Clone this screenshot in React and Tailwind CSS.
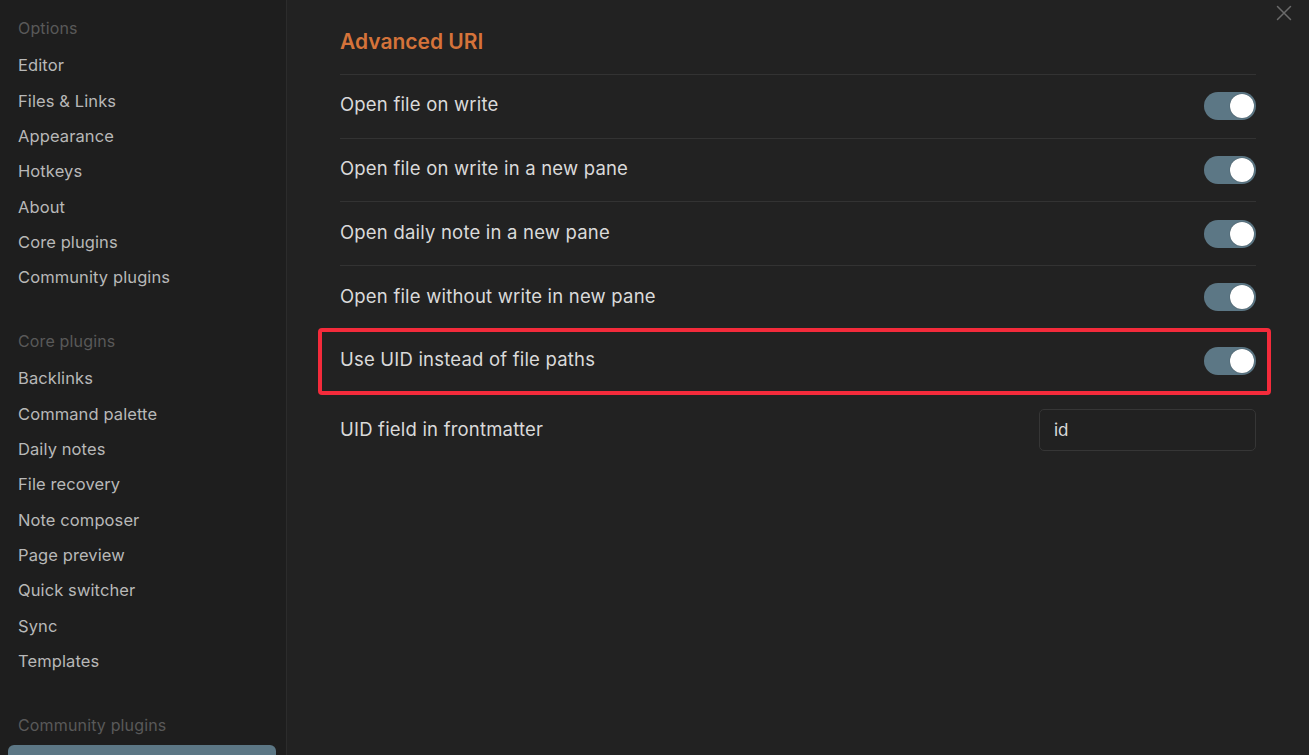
import React from "react";

const options = ["Editor", "Files & Links", "Appearance", "Hotkeys", "About", "Core plugins", "Community plugins"];
const core = ["Backlinks", "Command palette", "Daily notes", "File recovery", "Note composer", "Page preview", "Quick switcher", "Sync", "Templates"];

function Toggle() {
  return (
    <div className="w-[52px] h-[28px] rounded-full bg-[#5c7785] flex items-center justify-end pr-[2px] shrink-0">
      <div className="w-[24px] h-[24px] rounded-full bg-white shadow-[0_0_1px_rgba(0,0,0,0.5)]" />
    </div>
  );
}

function Header({ children }) {
  return (
    <div className="pl-[18px] pt-[18px] pb-[10px] leading-[20px] text-[16px] tracking-[0.15px] text-[#595959]">{children}</div>
  );
}

function Item({ children }) {
  return (
    <div className="pl-[18px] h-[35.37px] flex items-center text-[16.5px] tracking-[0.1px] text-[#b8b8b8]">{children}</div>
  );
}

function Row({ label, children, highlight }) {
  return (
    <div className="relative h-[63.7px] border-t border-[#333333] flex items-center justify-between">
      <span className="text-[18.5px] tracking-[0.2px] text-[#dadada] -mt-[2px]">{label}</span>
      {children}
      {highlight && (
        <div className="absolute left-[-22px] right-[-15px] top-[-2px] bottom-[-3px] border-[4px] border-[#f42b3b] rounded-[4px]" />
      )}
    </div>
  );
}

export default function App() {
  return (
    <div
      className="w-[1309px] h-[755px] flex overflow-hidden bg-[#222222] relative"
      style={{ fontFamily: "Inter, 'Noto Sans', sans-serif" }}
    >
      <div className="w-[287px] shrink-0 h-full bg-[#1e1e1e] border-r border-[#2c2c2c]">
        <Header>Options</Header>
        {options.map((o) => (
          <Item key={o}>{o}</Item>
        ))}
        <div className="h-[17.4px]" />
        <Header>Core plugins</Header>
        {core.map((o) => (
          <Item key={o}>{o}</Item>
        ))}
        <div className="h-[17.4px]" />
        <Header>Community plugins</Header>
        <div className="ml-[8px] mr-[10px] h-[36px] rounded-[6px] bg-[#5c7785]" />
      </div>
      <div className="flex-1 px-[53px]">
        <div className="h-[74px] flex items-center pt-[10px]">
          <h2 className="text-[21px] font-semibold text-[#d5733a]">Advanced URI</h2>
        </div>
        <Row label="Open file on write"><Toggle /></Row>
        <Row label="Open file on write in a new pane"><Toggle /></Row>
        <Row label="Open daily note in a new pane"><Toggle /></Row>
        <Row label="Open file without write in new pane"><Toggle /></Row>
        <Row label="Use UID instead of file paths" highlight><Toggle /></Row>
        <div className="h-[74px] flex items-center justify-between pt-[2px]">
          <span className="text-[18.5px] tracking-[0.2px] text-[#dadada] -mt-[2px]">UID field in frontmatter</span>
          <div className="w-[217px] h-[42px] border border-[#363636] rounded-[5px] bg-[#212121] flex items-center px-[14px] text-[17px] text-[#dadada]">
            id
          </div>
        </div>
      </div>
      <div className="absolute top-[5px] right-[17px] text-[#6b6b6b]">
        <svg width="16" height="16" viewBox="0 0 16 16" fill="none" stroke="currentColor" strokeWidth="1.5" strokeLinecap="round">
          <path d="M1.5 1.5 L14.5 14.5 M14.5 1.5 L1.5 14.5" />
        </svg>
      </div>
    </div>
  );
}
